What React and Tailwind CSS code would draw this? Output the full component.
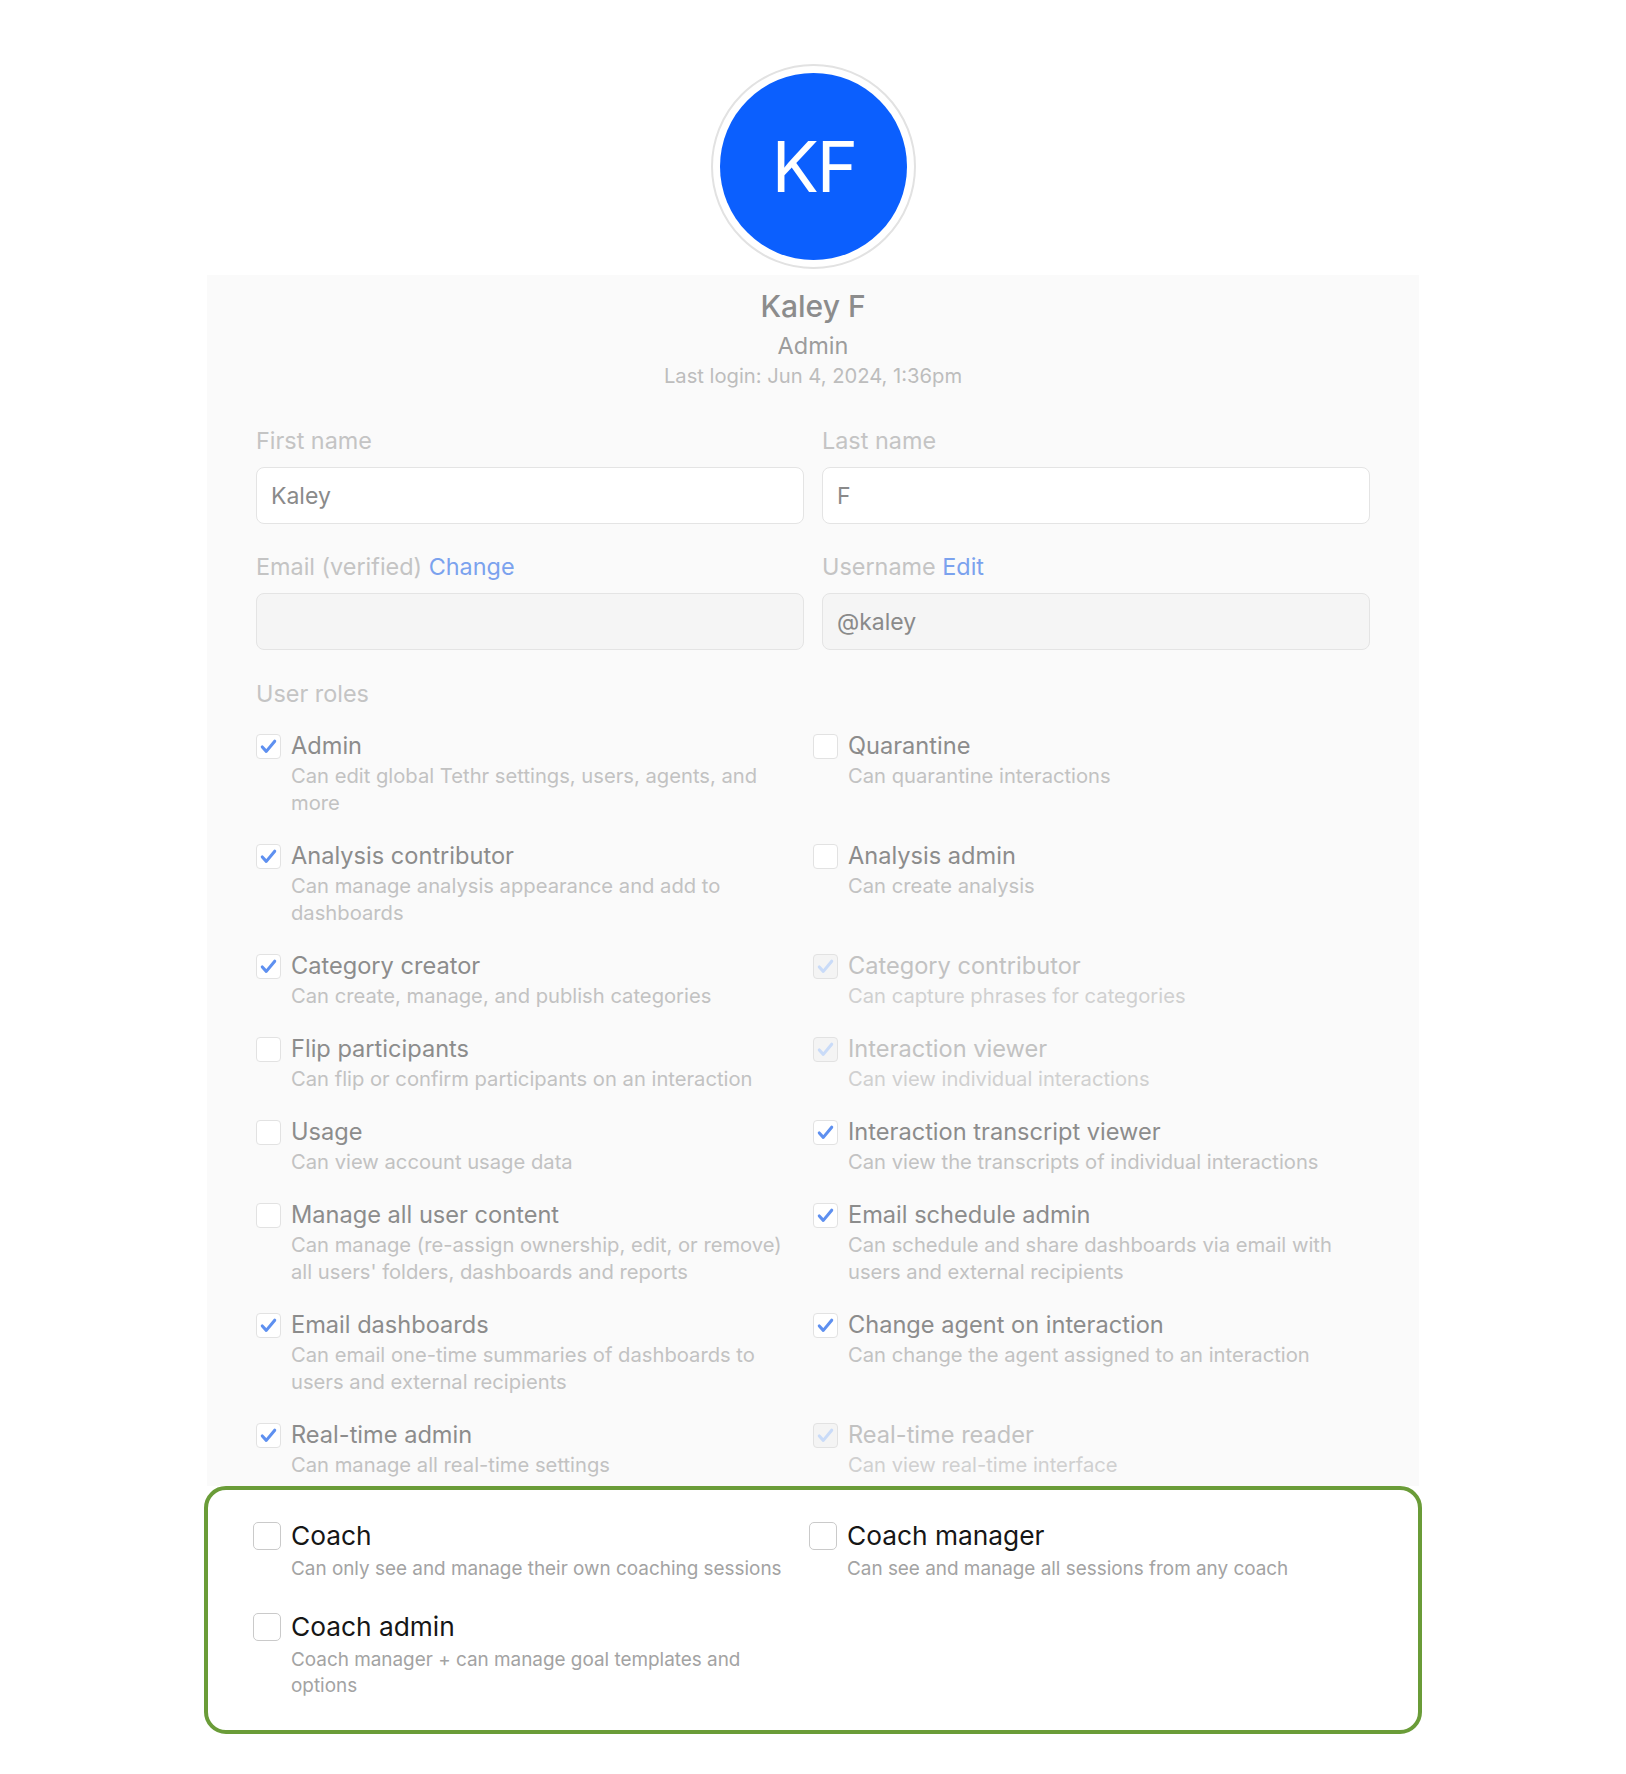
import { useState } from "react";

const roles = [
    { title: "Admin", desc: "Can edit global Tethr settings, users, agents, and more", checked: true },
    { title: "Quarantine", desc: "Can quarantine interactions", checked: false },
    { title: "Analysis contributor", desc: "Can manage analysis appearance and add to dashboards", checked: true },
    { title: "Analysis admin", desc: "Can create analysis", checked: false },
    { title: "Category creator", desc: "Can create, manage, and publish categories", checked: true },
    { title: "Category contributor", desc: "Can capture phrases for categories", checked: true, disabled: true },
    { title: "Flip participants", desc: "Can flip or confirm participants on an interaction", checked: false },
    { title: "Interaction viewer", desc: "Can view individual interactions", checked: true, disabled: true },
    { title: "Usage", desc: "Can view account usage data", checked: false },
    { title: "Interaction transcript viewer", desc: "Can view the transcripts of individual interactions", checked: true },
    { title: "Manage all user content", desc: "Can manage (re-assign ownership, edit, or remove) all users' folders, dashboards and reports", checked: false },
    { title: "Email schedule admin", desc: "Can schedule and share dashboards via email with users and external recipients", checked: true },
    { title: "Email dashboards", desc: "Can email one-time summaries of dashboards to users and external recipients", checked: true },
    { title: "Change agent on interaction", desc: "Can change the agent assigned to an interaction", checked: true },
    { title: "Real-time admin", desc: "Can manage all real-time settings", checked: true },
    { title: "Real-time reader", desc: "Can view real-time interface", checked: true, disabled: true },
];

const coachRoles = [
    { title: "Coach", desc: "Can only see and manage their own coaching sessions" },
    { title: "Coach manager", desc: "Can see and manage all sessions from any coach" },
    { title: "Coach admin", desc: "Coach manager + can manage goal templates and options" },
];

function Check({ checked, disabled }) {
    return (
        <div
            className={`mt-[4px] flex h-[25px] w-[25px] shrink-0 items-center justify-center rounded-[4px] border border-[#e2e2e2] ${
                disabled ? "bg-[#f4f4f4]" : "bg-white"
            }`}
        >
            {checked && (
                <svg viewBox="0 0 24 24" className="h-[23px] w-[23px]" fill="none">
                    <path
                        d="M5.5 12.5l4.2 4.6L18.5 6.5"
                        stroke={disabled ? "#c9dbf8" : "#5e90f0"}
                        strokeWidth="3.2"
                        strokeLinecap="round"
                        strokeLinejoin="round"
                    />
                </svg>
            )}
        </div>
    );
}

function RoleItem({ role }) {
    const [checked, setChecked] = useState(role.checked);
    return (
        <label
            className="flex cursor-pointer gap-[10px] pr-[20px]"
            onClick={(e) => {
                e.preventDefault();
                if (!role.disabled) setChecked(!checked);
            }}
        >
            <Check checked={checked} disabled={role.disabled} />
            <div>
                <div
                    className={`text-[23.6px] leading-[32px] ${
                        role.disabled ? "text-[#c2c2c2]" : "text-[#8c8c8c]"
                    }`}
                >
                    {role.title}
                </div>
                <div
                    className={`text-[20.2px] leading-[27px] ${
                        role.disabled ? "text-[#d0d0d0]" : "text-[#c2c2c2]"
                    }`}
                >
                    {role.desc}
                </div>
            </div>
        </label>
    );
}

function CoachItem({ role }) {
    const [checked, setChecked] = useState(false);
    return (
        <label
            className="flex cursor-pointer gap-[10px] pr-[20px]"
            onClick={(e) => {
                e.preventDefault();
                setChecked(!checked);
            }}
        >
            <div className="mt-[3px] flex h-[28px] w-[28px] shrink-0 items-center justify-center rounded-[5px] border-[1.5px] border-[#cacaca] bg-white">
                {checked && (
                    <svg viewBox="0 0 24 24" className="h-[24px] w-[24px]" fill="none">
                        <path d="M5.5 12.5l4.2 4.6L18.5 6.5" stroke="#5e90f0" strokeWidth="3.2" strokeLinecap="round" strokeLinejoin="round" />
                    </svg>
                )}
            </div>
            <div>
                <div className="text-[26.3px] leading-[34px] text-[#161616]">{role.title}</div>
                <div className="mt-[3px] text-[18.9px] leading-[26px] text-[#a3a3a3]">{role.desc}</div>
            </div>
        </label>
    );
}

function Field({ label, link, value, disabled }) {
    return (
        <div>
            <div className="mb-[11px] text-[23.4px] leading-[30px] text-[#c4c4c4]">
                {label}
                {link && <span className="text-[#7ba2ee]"> {link}</span>}
            </div>
            <input
                defaultValue={value}
                disabled={disabled}
                className={`h-[57px] w-full rounded-[8px] border border-[#e4e4e4] px-[14px] text-[23px] text-[#8a8a8a] outline-none ${
                    disabled ? "bg-[#f5f5f5]" : "bg-white"
                }`}
            />
        </div>
    );
}

export default function App() {
    return (
        <div className="min-h-[1774px] bg-white pt-[64px] font-['Inter',sans-serif]">
            <div className="mx-auto w-[1212px]">
                <div className="flex justify-center">
                    <div className="flex h-[205px] w-[205px] items-center justify-center rounded-full border-2 border-[#e2e2e2] bg-white">
                        <div className="flex h-[187px] w-[187px] items-center justify-center rounded-full bg-[#0b5ffe] pl-[2px] text-[70px] tracking-[-2px] text-white">
                            KF
                        </div>
                    </div>
                </div>

                <div className="mt-[6px] bg-[#fafafa] px-[49px] pb-[8px] pt-[13px]">
                    <div className="text-center">
                        <div className="text-[30px] font-medium leading-[36px] text-[#8c8c8c]">Kaley F</div>
                        <div className="mt-[7px] text-[23.5px] leading-[30px] text-[#9c9c9c]">Admin</div>
                        <div className="mt-[3px] text-[20.2px] leading-[24px] text-[#bdbdbd]">
                            Last login: Jun 4, 2024, 1:36pm
                        </div>
                    </div>

                    <div className="mt-[38px] grid grid-cols-2 gap-x-[18px] gap-y-[28px]">
                        <Field label="First name" value="Kaley" />
                        <Field label="Last name" value="F" />
                        <Field label="Email (verified)" link="Change" value="" disabled />
                        <Field label="Username" link="Edit" value="@kaley" disabled />
                    </div>

                    <div className="mt-[29px] text-[23.4px] leading-[30px] text-[#c4c4c4]">User roles</div>

                    <div className="mt-[21px] grid grid-cols-2 gap-y-[24px]">
                        {roles.map((r) => (
                            <RoleItem key={r.title} role={r} />
                        ))}
                    </div>
                </div>

                <div className="-mx-[3px] rounded-[22px] border-4 border-[#6a9c38] bg-white pb-[31px] pl-[45px] pr-[46px] pt-[29px]">
                    <div className="grid grid-cols-[556px_1fr] gap-y-[28px]">
                        {coachRoles.map((r) => (
                            <CoachItem key={r.title} role={r} />
                        ))}
                    </div>
                </div>
            </div>
        </div>
    );
}
